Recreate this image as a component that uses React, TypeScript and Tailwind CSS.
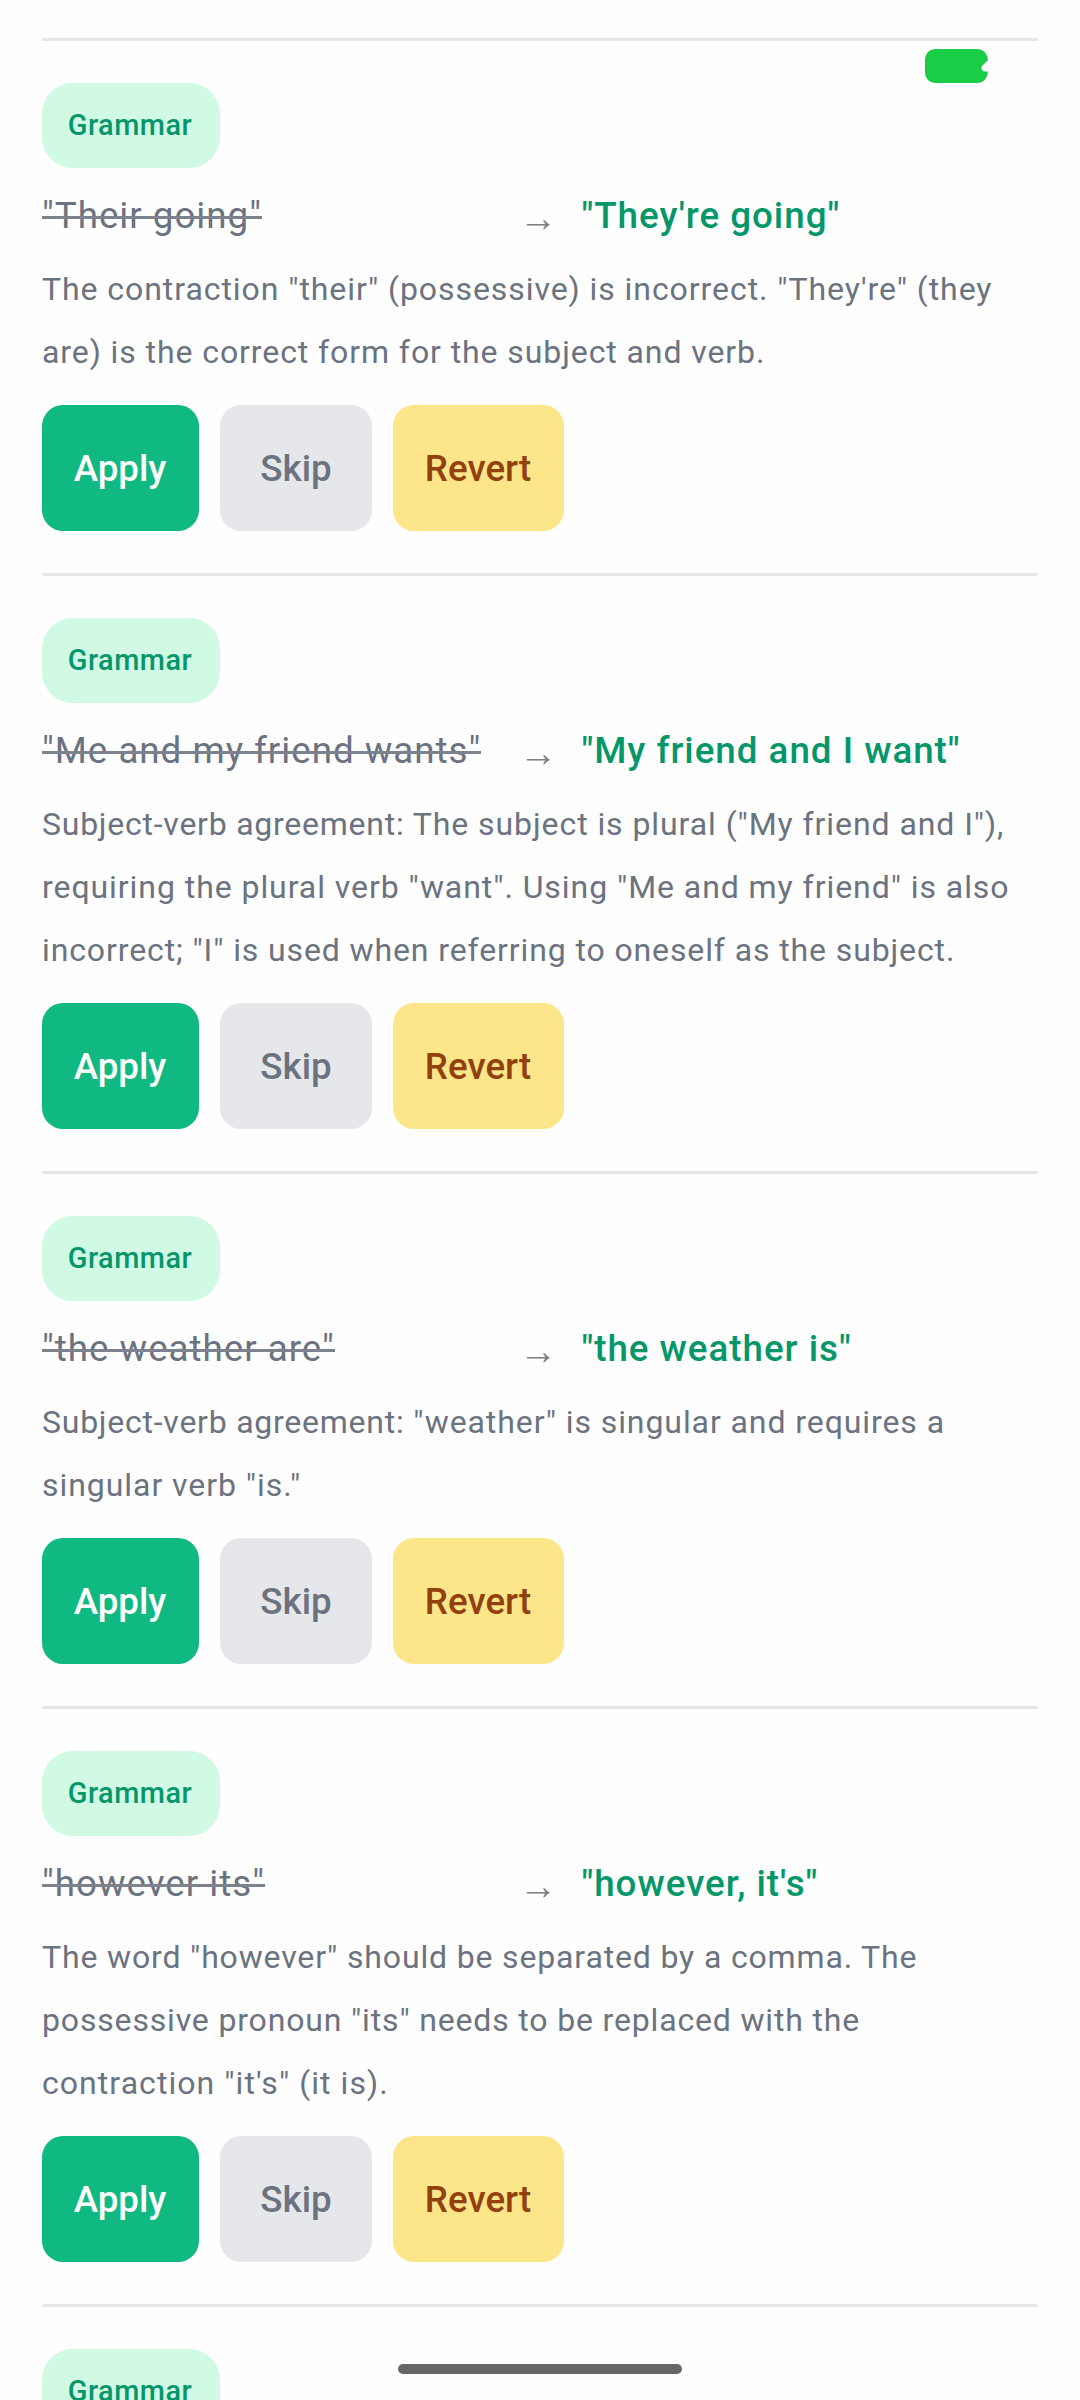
type Line = { text: string; tracking: number; lead?: string };

type Suggestion = {
  original: string;
  corrected: string;
  lines: Line[];
};

const suggestions: Suggestion[] = [
  {
    original: '"Their going"',
    corrected: '"They\'re going"',
    lines: [
      { text: 'The contraction "their" (possessive) is incorrect. "They\'re" (they', tracking: 0.935 },
      { text: "are) is the correct form for the subject and verb.", tracking: 0.915 },
    ],
  },
  {
    original: '"Me and my friend wants"',
    corrected: '"My friend and I want"',
    lines: [
      { lead: "Subject-verb agreement:", text: ' The subject is plural ("My friend and I"),', tracking: 0.93 },
      { text: 'requiring the plural verb "want". Using "Me and my friend" is also', tracking: 0.94 },
      { text: 'incorrect; "I" is used when referring to oneself as the subject.', tracking: 0.885 },
    ],
  },
  {
    original: '"the weather are"',
    corrected: '"the weather is"',
    lines: [
      { lead: "Subject-verb agreement:", text: ' "weather" is singular and requires a', tracking: 0.92 },
      { text: 'singular verb "is."', tracking: 0.945 },
    ],
  },
  {
    original: '"however its"',
    corrected: '"however, it\'s"',
    lines: [
      { text: 'The word "however" should be separated by a comma. The', tracking: 0.845 },
      { text: 'possessive pronoun "its" needs to be replaced with the', tracking: 0.835 },
      { text: 'contraction "it\'s" (it is).', tracking: 1.055 },
    ],
  },
];

function Badge() {
  return (
    <span className="flex h-[85px] w-[178px] items-center justify-center rounded-[31px] bg-[#d0fae4] pr-[2px] text-[28.875px] leading-[85px] font-medium tracking-[0.5px] text-[#059669]">
      Grammar
    </span>
  );
}

function SuggestionItem({ original, corrected, lines }: Suggestion) {
  return (
    <article className="border-t-[3px] border-[#e6e7e9] py-[42px]">
      <Badge />
      <div className="mt-4 grid h-[63px] grid-cols-[1fr_38px_1fr] grid-rows-[63px] items-center gap-[21px] text-[36.75px] leading-[63px] tracking-[0.98px] whitespace-nowrap">
        <del className="relative justify-self-start text-[#6b7280] no-underline after:absolute after:inset-x-0 after:top-[32px] after:h-[3px] after:bg-[#7c828e]">
          {original}
        </del>
        <span className="-ml-0.5 translate-y-[3px] text-[38px] text-[#808080]">→</span>
        <ins className="pl-[1.5px] font-medium text-[#059669] no-underline">{corrected}</ins>
      </div>
      <p className="mt-[11px] text-[32px] leading-[63px] whitespace-nowrap text-[#6b7280]">
        {lines.map(({ text, tracking, lead }) => (
          <span key={text} className="block" style={{ letterSpacing: tracking }}>
            {lead && <span className="tracking-[0.755px]">{lead}</span>}
            {text}
          </span>
        ))}
      </p>
      <div className="mt-[21px] flex gap-[21px] text-[36.75px] font-medium tracking-normal">
        <button className="h-[126px] w-[157px] rounded-[21px] bg-[#10b981] pt-[2px] pr-[1px] text-white">Apply</button>
        <button className="h-[126px] w-[152px] rounded-[21px] bg-[#e5e7eb] pt-[2px] text-[#6b7280]">Skip</button>
        <button className="h-[126px] w-[171px] rounded-[21px] bg-[#fde68a] pt-[2px] pr-[1px] text-[#92400e]">Revert</button>
      </div>
    </article>
  );
}

export default function App() {
  return (
    <main className="relative h-[2400px] w-[1080px] overflow-hidden bg-[#fefefe] px-[42px] pt-[38px] font-[Roboto,sans-serif]">
      {suggestions.map((s) => (
        <SuggestionItem key={s.original} {...s} />
      ))}
      <article className="border-t-[3px] border-[#e6e7e9] pt-[42px]">
        <Badge />
      </article>

      {/* Status chip */}
      <svg className="absolute top-[49px] left-[925px]" width="63" height="34" viewBox="0 0 63 34" fill="#1acd47">
        <path d="M11 0H52C58 0 62.5 4.500 63 11L57.500 16.500C55.500 19 57 22.500 60 22.500H63C62.500 29.500 58 34 52 34H11C4.500 34 0 29.500 0 23V11C0 4.500 4.500 0 11 0Z" />
      </svg>

      {/* Home indicator */}
      <div className="absolute bottom-[26px] left-[398px] h-[10px] w-[284px] rounded-full bg-[#676767]" />
    </main>
  );
}
